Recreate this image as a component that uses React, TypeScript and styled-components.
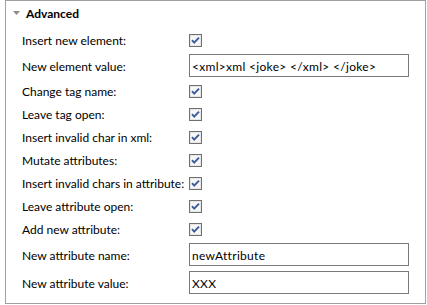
import React from "react";
import styled, { createGlobalStyle } from "styled-components";

const Global = createGlobalStyle`
  html, body { margin: 0; padding: 0; background: #ffffff; }
  body { font-family: Lato, "Noto Sans", sans-serif; color: #000; }
`;

const Panel = styled.section`
  box-sizing: border-box;
  margin-left: 5px;
  width: 421px;
  height: 304px;
  border: 1px solid #a0a0a0;
  background: #ffffff;
  display: flex;
  flex-direction: column;
`;

const Header = styled.div`
  display: flex;
  align-items: center;
  height: 25px;
  padding-left: 7px;
  gap: 5px;
`;

const Title = styled.span`
  font-weight: 700;
  font-size: 12px;
  line-height: 16px;
  color: #000;
`;

const Form = styled.div`
  display: grid;
  grid-template-columns: 167px 220px;
  grid-auto-rows: auto;
  row-gap: 5px;
  align-items: center;
  padding: 5px 0 0 16px;
`;

const Label = styled.label`
  font-size: 12px;
  line-height: 15px;
  padding-top: 1px;
  white-space: nowrap;
  color: #000;
`;

const CheckCell = styled.div`
  height: 18px;
  display: flex;
  align-items: center;
`;

const Box = styled.span`
  display: inline-flex;
  width: 13px;
  height: 13px;
`;

const TextField = styled.input`
  box-sizing: border-box;
  width: 220px;
  height: 23px;
  margin: 0;
  border: 1px solid #7a7a7a;
  border-radius: 0;
  padding: 1px 2px 0;
  font-family: Lato, "Noto Sans", sans-serif;
  font-size: 12px;
  letter-spacing: 0.3px;
  color: #000;
  background: #fff;
  outline: none;
`;

const Triangle = () => (
  <svg width="8" height="5" viewBox="0 0 8 5">
    <path d="M0 0 H7 L3.5 4 Z" fill="#8a8a8a" />
  </svg>
);

const Check = () => (
  <Box>
    <svg width="13" height="13" viewBox="0 0 13 13">
      <rect x="0.5" y="0.5" width="12" height="12" fill="#ffffff" stroke="#707070" />
      <rect x="1.5" y="1.5" width="10" height="10" fill="#f7f7f7" stroke="#e6e6e6" />
      <path d="M3 6.2 L5.2 8.6 L10 3.6" fill="none" stroke="#3d5a99" strokeWidth="1.9" />
    </svg>
  </Box>
);

type Row = { label: string; kind: "check" } | { label: string; kind: "text"; value: string };

const rows: Row[] = [
  { label: "Insert new element:", kind: "check" },
  { label: "New element value:", kind: "text", value: "<xml>xml <joke> </xml> </joke>" },
  { label: "Change tag name:", kind: "check" },
  { label: "Leave tag open:", kind: "check" },
  { label: "Insert invalid char in xml:", kind: "check" },
  { label: "Mutate attributes:", kind: "check" },
  { label: "Insert invalid chars in attribute:", kind: "check" },
  { label: "Leave attribute open:", kind: "check" },
  { label: "Add new attribute:", kind: "check" },
  { label: "New attribute name:", kind: "text", value: "newAttribute" },
  { label: "New attribute value:", kind: "text", value: "XXX" },
];

export default function App() {
  return (
    <>
      <Global />
      <Panel>
        <Header>
          <Triangle />
          <Title>Advanced</Title>
        </Header>
        <Form>
          {rows.map((r) => (
            <React.Fragment key={r.label}>
              <Label>{r.label}</Label>
              {r.kind === "check" ? (
                <CheckCell>
                  <Check />
                </CheckCell>
              ) : (
                <TextField defaultValue={r.value} readOnly />
              )}
            </React.Fragment>
          ))}
        </Form>
      </Panel>
    </>
  );
}
